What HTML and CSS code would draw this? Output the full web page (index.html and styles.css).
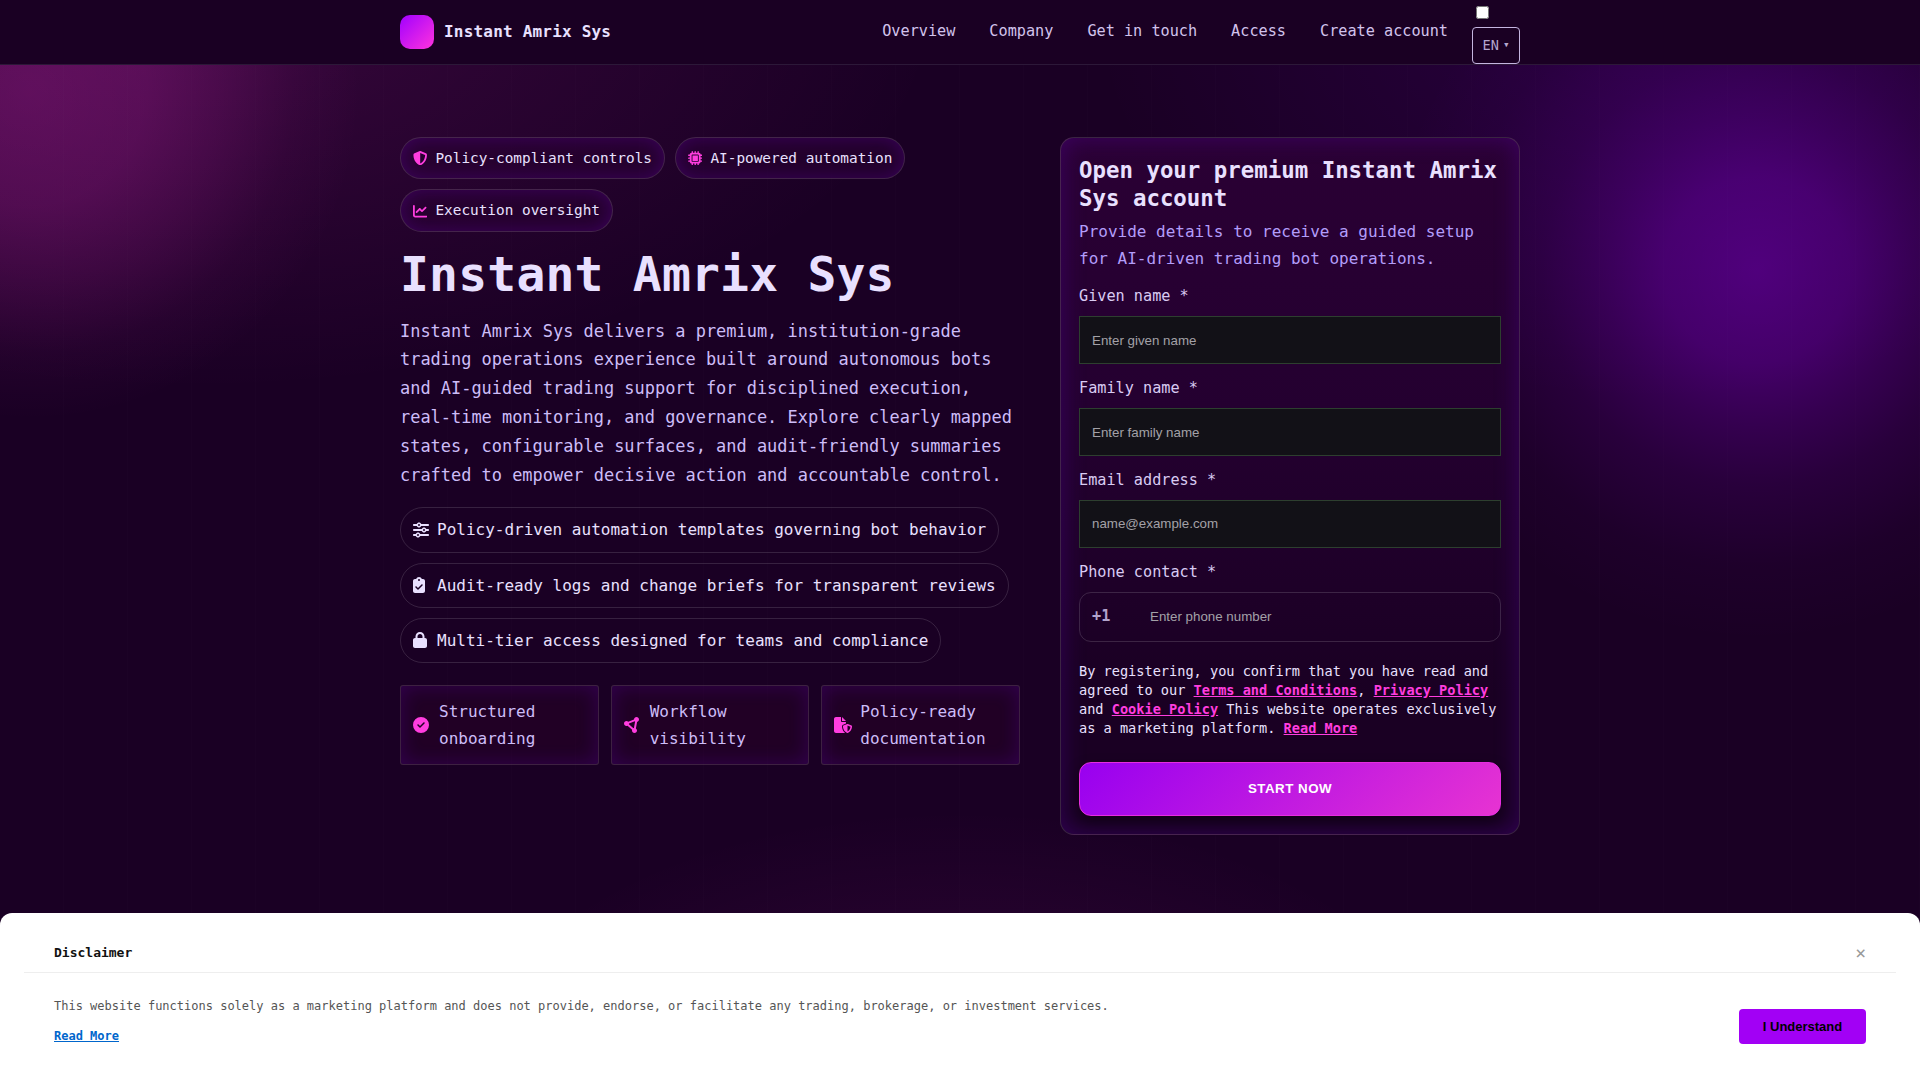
FILE: index.html
```html
<!DOCTYPE html>
<html lang="en">
<head>
  <meta charset="UTF-8">
  <meta name="viewport" content="width=device-width, initial-scale=1.0">
  <title>Instant Amrix Sys</title>
  <link rel="stylesheet" href="styles.css">
</head>
<body>
  <header class="site-header">
    <div class="container header-inner">
      <a class="brand" href="#">
        <span class="brand-mark"></span>
        <span>Instant Amrix Sys</span>
      </a>
      <div class="header-right">
        <nav class="nav">
          <a href="#">Overview</a>
          <a href="#">Company</a>
          <a href="#">Get in touch</a>
          <a href="#">Access</a>
          <a href="#">Create account</a>
        </nav>
        <div class="lang">
          <input type="checkbox" class="lang-toggle" aria-label="Language">
          <label class="lang-btn">EN <span class="caret">▾</span></label>
        </div>
      </div>
    </div>
  </header>

  <main class="container hero">
    <section class="hero-text">
      <div class="pills">
        <span class="pill">
          <svg class="icon" viewBox="0 0 512 512"><path d="M256 0c4.6 0 9.2 1 13.4 2.9L457.7 82.8c22 9.3 38.4 31 38.3 57.2c-.5 99.2-41.3 280.7-213.6 363.2c-16.7 8-36.1 8-52.8 0C57.3 420.7 16.5 239.2 16 140c-.1-26.2 16.3-47.9 38.3-57.2L242.7 2.9C246.8 1 251.4 0 256 0zm0 66.8V444.8C394 378 431.1 230.1 432 141.4L256 66.8l0 0z"/></svg>
          Policy-compliant controls
        </span>
        <span class="pill">
          <svg class="icon" viewBox="0 0 512 512"><path d="M176 24c0-13.3-10.7-24-24-24s-24 10.7-24 24V64c-35.3 0-64 28.7-64 64H24c-13.3 0-24 10.7-24 24s10.7 24 24 24H64v56H24c-13.3 0-24 10.7-24 24s10.7 24 24 24H64v56H24c-13.3 0-24 10.7-24 24s10.7 24 24 24H64c0 35.3 28.7 64 64 64v40c0 13.3 10.7 24 24 24s24-10.7 24-24V448h56v40c0 13.3 10.7 24 24 24s24-10.7 24-24V448h56v40c0 13.3 10.7 24 24 24s24-10.7 24-24V448c35.3 0 64-28.7 64-64h40c13.3 0 24-10.7 24-24s-10.7-24-24-24H448V280h40c13.3 0 24-10.7 24-24s-10.7-24-24-24H448V176h40c13.3 0 24-10.7 24-24s-10.7-24-24-24H448c0-35.3-28.7-64-64-64V24c0-13.3-10.7-24-24-24s-24 10.7-24 24V64H280V24c0-13.3-10.7-24-24-24s-24 10.7-24 24V64H176V24zM160 128H352c17.7 0 32 14.3 32 32V352c0 17.7-14.3 32-32 32H160c-17.7 0-32-14.3-32-32V160c0-17.7 14.3-32 32-32zm192 32H160V352H352V160z"/></svg>
          AI-powered automation
        </span>
        <span class="pill">
          <svg class="icon" viewBox="0 0 512 512"><path d="M64 64c0-17.7-14.3-32-32-32S0 46.3 0 64V400c0 44.2 35.8 80 80 80H480c17.7 0 32-14.3 32-32s-14.3-32-32-32H80c-8.8 0-16-7.2-16-16V64zm406.6 86.6c12.5-12.5 12.5-32.8 0-45.3s-32.8-12.5-45.3 0L320 210.7l-57.4-57.4c-12.5-12.5-32.8-12.5-45.3 0l-112 112c-12.5 12.5-12.5 32.8 0 45.3s32.8 12.5 45.3 0L240 221.3l57.4 57.4c12.5 12.5 32.8 12.5 45.3 0l128-128z"/></svg>
          Execution oversight
        </span>
      </div>

      <h1>Instant Amrix Sys</h1>
      <p class="lead">Instant Amrix Sys delivers a premium, institution-grade trading operations experience built around autonomous bots and AI-guided trading support for disciplined execution, real-time monitoring, and governance. Explore clearly mapped states, configurable surfaces, and audit-friendly summaries crafted to empower decisive action and accountable control.</p>

      <ul class="features">
        <li>
          <svg class="icon" viewBox="0 0 512 512"><path d="M0 416c0 17.7 14.3 32 32 32l54.7 0c12.3 28.3 40.5 48 73.3 48s61-19.7 73.3-48L480 448c17.7 0 32-14.3 32-32s-14.3-32-32-32l-246.7 0c-12.3-28.3-40.5-48-73.3-48s-61 19.7-73.3 48L32 384c-17.7 0-32 14.3-32 32zm128 0a32 32 0 1 1 64 0 32 32 0 1 1 -64 0zM320 256a32 32 0 1 1 64 0 32 32 0 1 1 -64 0zm32-80c-32.8 0-61 19.7-73.3 48L32 224c-17.7 0-32 14.3-32 32s14.3 32 32 32l246.7 0c12.3 28.3 40.5 48 73.3 48s61-19.7 73.3-48l54.7 0c17.7 0 32-14.3 32-32s-14.3-32-32-32l-54.7 0c-12.3-28.3-40.5-48-73.3-48zM192 128a32 32 0 1 1 0-64 32 32 0 1 1 0 64zm73.3-64C253 35.7 224.8 16 192 16s-61 19.7-73.3 48L32 64C14.3 64 0 78.3 0 96s14.3 32 32 32l86.7 0c12.3 28.3 40.5 48 73.3 48s61-19.7 73.3-48L480 128c17.7 0 32-14.3 32-32s-14.3-32-32-32L265.3 64z"/></svg>
          Policy-driven automation templates governing bot behavior
        </li>
        <li>
          <svg class="icon" viewBox="0 0 512 512"><path d="M192 0c-41.8 0-77.4 26.7-90.5 64H64C28.7 64 0 92.7 0 128V448c0 35.3 28.7 64 64 64H320c35.3 0 64-28.7 64-64V128c0-35.3-28.7-64-64-64H282.5C269.4 26.7 233.8 0 192 0zm0 64a32 32 0 1 1 0 64 32 32 0 1 1 0-64zM305 273L177 401c-9.4 9.4-24.6 9.4-33.9 0L79 337c-9.4-9.4-9.4-24.6 0-33.9s24.6-9.4 33.9 0l47 47L271 239c9.4-9.4 24.6-9.4 33.9 0s9.4 24.6 0 33.9z"/></svg>
          Audit-ready logs and change briefs for transparent reviews
        </li>
        <li>
          <svg class="icon" viewBox="0 0 512 512"><path d="M144 144v48H304V144c0-44.2-35.8-80-80-80s-80 35.8-80 80zM80 192V144C80 64.5 144.5 0 224 0s144 64.5 144 144v48h16c35.3 0 64 28.7 64 64V448c0 35.3-28.7 64-64 64H64c-35.3 0-64-28.7-64-64V256c0-35.3 28.7-64 64-64H80z"/></svg>
          Multi-tier access designed for teams and compliance
        </li>
      </ul>

      <div class="cards">
        <div class="card">
          <svg class="icon" viewBox="0 0 512 512"><path d="M256 512A256 256 0 1 0 256 0a256 256 0 1 0 0 512zM369 209L241 337c-9.4 9.4-24.6 9.4-33.9 0l-64-64c-9.4-9.4-9.4-24.6 0-33.9s24.6-9.4 33.9 0l47 47L335 175c9.4-9.4 24.6-9.4 33.9 0s9.4 24.6 0 33.9z"/></svg>
          <span>Structured onboarding</span>
        </div>
        <div class="card">
          <svg class="icon" viewBox="0 0 512 512"><path d="M418.4 157.9c35.3-8.3 61.6-40 61.6-77.9c0-44.2-35.8-80-80-80c-43.4 0-78.7 34.5-80 77.5L136.2 151.1C121.7 136.8 101.9 128 80 128c-44.2 0-80 35.8-80 80s35.8 80 80 80c12.2 0 23.8-2.7 34.1-7.6L259.7 407.8c-2.4 7.6-3.7 15.8-3.7 24.2c0 44.2 35.8 80 80 80s80-35.8 80-80c0-27.7-14-52.1-35.4-66.4l37.8-207.7zM156.3 232.2c2.2-6.9 3.5-14.2 3.7-21.7l183.8-73.5c3.6 3.5 7.4 6.7 11.6 9.5L317.6 354.1c-5.5 1.3-10.8 3.1-15.8 5.5L156.3 232.2z"/></svg>
          <span>Workflow visibility</span>
        </div>
        <div class="card">
          <svg class="icon icon-wide" viewBox="0 0 576 512"><path d="M0 64C0 28.7 28.7 0 64 0H224V128c0 17.7 14.3 32 32 32H384v47l-92.8 37.1c-21.3 8.5-35.2 29.1-35.2 52c0 56.6 18.9 148 94.2 208.3c-9 4.8-19.3 7.6-30.2 7.6H64c-35.3 0-64-28.7-64-64V64zm384 64H256V0L384 128zm39.1 97.7c5.7-2.3 12.1-2.3 17.8 0l120 48C570 277.4 576 286.2 576 296c0 63.3-25.9 168.8-134.8 214.2c-5.9 2.5-12.6 2.5-18.5 0C313.9 464.8 288 359.3 288 296c0-9.8 6-18.6 15.1-22.3l120-48zM527.4 312L432 273.8V461.7c68.2-33 91.5-99 95.4-149.7z"/></svg>
          <span>Policy-ready documentation</span>
        </div>
      </div>
    </section>

    <form class="signup">
      <h2>Open your premium Instant Amrix Sys account</h2>
      <p class="signup-sub">Provide details to receive a guided setup for AI-driven trading bot operations.</p>
      <div class="field">
        <label for="fname">Given name *</label>
        <input id="fname" type="text" placeholder="Enter given name">
      </div>
      <div class="field">
        <label for="lname">Family name *</label>
        <input id="lname" type="text" placeholder="Enter family name">
      </div>
      <div class="field">
        <label for="email">Email address *</label>
        <input id="email" type="email" placeholder="name@example.com">
      </div>
      <div class="field">
        <label for="phone">Phone contact *</label>
        <div class="phone">
          <span class="code">+1</span>
          <input id="phone" type="tel" placeholder="Enter phone number">
        </div>
      </div>
      <p class="consent">By registering, you confirm that you have read and agreed to our <a href="#">Terms and Conditions</a>, <a href="#">Privacy Policy</a> and <a href="#">Cookie Policy</a> This website operates exclusively as a marketing platform. <a href="#">Read More</a></p>
      <button type="button" class="submit">START NOW</button>
    </form>
  </main>

  <div class="disclaimer">
    <div class="disclaimer-head">
      <strong>Disclaimer</strong>
      <span class="close">×</span>
    </div>
    <div class="disclaimer-body">
      <div>
        <p>This website functions solely as a marketing platform and does not provide, endorse, or facilitate any trading, brokerage, or investment services.</p>
        <a href="#">Read More</a>
      </div>
      <button type="button" class="agree">I Understand</button>
    </div>
  </div>
</body>
</html>
```

FILE: styles.css
```css
* {
  box-sizing: border-box;
}
body {
  margin: 0;
  height: 100vh;
  overflow: hidden;
  font-family: "DejaVu Sans Mono", monospace;
  font-size: 16px;
  line-height: 1.7;
  color: #e9e0ff;
  background:
    repeating-linear-gradient(90deg, transparent 0 63px, rgba(255, 255, 255, 0.008) 63px 64px),
    radial-gradient(circle 330px at 30px 90px, rgba(255, 51, 221, 0.24), rgba(255, 51, 221, 0.2) 35%, rgba(255, 51, 221, 0.12) 58%, rgba(255, 51, 221, 0.04) 80%, transparent),
    radial-gradient(circle 370px at 1757px 270px, rgba(160, 0, 255, 0.38), rgba(160, 0, 255, 0.31) 25%, rgba(160, 0, 255, 0.2) 42%, rgba(160, 0, 255, 0.11) 58%, rgba(160, 0, 255, 0.03) 80%, transparent),
    radial-gradient(750px 390px at 10% 0, rgba(255, 51, 221, 0.13), transparent),
    radial-gradient(560px 400px at 86% 0, rgba(140, 0, 255, 0.13), transparent),
    radial-gradient(500px 270px at 50% 100%, rgba(255, 51, 221, 0.1), transparent),
    #1a0024;
}
a {
  color: inherit;
  text-decoration: none;
}
.container {
  width: 1120px;
  margin: 0 auto;
}
.site-header {
  height: 65px;
  background: #1a0023;
  border-bottom: 1px solid #2c1838;
}
.header-inner {
  height: 64px;
  display: flex;
  align-items: center;
  justify-content: space-between;
}
.brand {
  display: flex;
  align-items: center;
  gap: 10px;
  font-weight: bold;
  letter-spacing: 0.2px;
}
.brand-mark {
  width: 34px;
  height: 34px;
  border-radius: 10px;
  background: linear-gradient(135deg, #a100ff, #ff33dd);
}
.header-right {
  display: flex;
  align-items: center;
  gap: 24px;
}
.nav {
  display: flex;
  gap: 34px;
  padding-bottom: 1px;
  font-size: 15.2px;
  color: #d2c3ec;
}
.lang {
  width: 48px;
  height: 64px;
  display: flex;
  flex-direction: column;
  justify-content: space-between;
  padding-top: 6px;
}
.lang-toggle {
  width: 13px;
  height: 13px;
  margin: 0 0 0 4px;
}
.lang-btn {
  height: 37px;
  display: flex;
  align-items: center;
  justify-content: center;
  gap: 4px;
  border: 1px solid #c4b5e0;
  border-radius: 4px;
  font-size: 13.6px;
  color: #b5a7cf;
}
.caret {
  font-size: 11px;
}

.hero {
  display: grid;
  grid-template-columns: 620px 460px;
  gap: 40px;
  align-items: start;
  padding-top: 72px;
}
.icon {
  width: 1em;
  height: 1em;
  flex: none;
  fill: currentColor;
}
.pills {
  display: flex;
  flex-wrap: wrap;
  gap: 10px;
}
.pill {
  display: flex;
  align-items: center;
  gap: 8px;
  padding: 8px 12px;
  font-size: 14.4px;
  border: 1px solid rgba(255, 255, 255, 0.14);
  border-radius: 22px;
  background: rgba(40, 0, 48, 0.6);
  box-shadow: inset 0 0 18px rgba(110, 0, 200, 0.3);
}
.pill .icon,
.card .icon {
  color: #ff3ddf;
}
h1 {
  margin: 14px 0 13px;
  font-size: 48px;
  line-height: 1.2;
  letter-spacing: 0.2px;
}
.lead {
  margin: 0 0 18px;
  font-size: 16.96px;
  color: #cdbdf8;
}
.features {
  list-style: none;
  margin: 0 0 22px;
  padding: 0;
  display: flex;
  flex-direction: column;
  align-items: flex-start;
  gap: 10px;
}
.features li {
  display: flex;
  align-items: center;
  gap: 8px;
  padding: 8px 12px;
  border: 1px solid rgba(255, 255, 255, 0.13);
  border-radius: 24px;
}
.cards {
  display: grid;
  grid-template-columns: repeat(3, 1fr);
  gap: 12px;
}
.card {
  display: flex;
  align-items: center;
  gap: 10px;
  padding: 12px;
  border: 1px solid rgba(255, 255, 255, 0.13);
  border-radius: 3px;
  background: rgba(255, 0, 100, 0.03);
  box-shadow: inset 0 0 20px rgba(120, 0, 255, 0.2);
  color: #cdbdf8;
}
.card .icon-wide {
  width: 18px;
  margin-right: -2px;
}

.signup {
  padding: 18px;
  border: 1px solid rgba(255, 255, 255, 0.14);
  border-radius: 14px;
  background: linear-gradient(#2a0034, #240030 40%, #1a0023 80%);
  box-shadow: inset 0 0 24px rgba(110, 0, 220, 0.28);
}
.signup h2 {
  margin: 0 0 6px;
  font-size: 22.4px;
  line-height: 28px;
}
.signup-sub {
  margin: 0 0 12px;
  color: #b39dfa;
}
.field {
  margin-bottom: 12px;
}
.field label {
  display: block;
  margin-bottom: 6px;
  font-size: 15.2px;
  color: #d9cbf3;
}
.field input {
  display: block;
  width: 100%;
  height: 48px;
  padding: 0 12px;
  border: 1px solid #2d3f2f;
  background: #121117;
  font-family: "Liberation Sans", Arial, sans-serif;
  font-size: 13.33px;
}
.field input::placeholder {
  color: #a3a1a7;
}
.phone {
  height: 50px;
  display: flex;
  align-items: center;
  border: 1px solid rgba(255, 255, 255, 0.14);
  border-radius: 12px;
}
.code {
  width: 58px;
  padding-left: 12px;
  font-weight: bold;
  font-size: 15.2px;
  color: #b3a4cc;
}
.phone input {
  flex: 1;
  border: 0;
  background: none;
}
.consent {
  margin: 20px 0 24px;
  font-size: 13.6px;
  line-height: 1.4;
}
.consent a {
  color: #ff3ddf;
  font-weight: bold;
  text-decoration: underline;
}
.submit {
  display: block;
  width: 100%;
  height: 54px;
  border: 1px solid #e62ee0;
  border-radius: 12px;
  background: linear-gradient(135deg, #9800f0, #e733d2);
  box-shadow: 0 6px 14px rgba(0, 0, 0, 0.4);
  font: bold 13.33px "Liberation Sans", Arial, sans-serif;
  letter-spacing: 0.5px;
  color: #fff;
}

.disclaimer {
  position: fixed;
  left: 0;
  right: 0;
  bottom: 0;
  height: 167px;
  padding: 24px;
  background: #fff;
  border-radius: 12px 12px 0 0;
  color: #555;
}
.disclaimer-head {
  display: flex;
  align-items: center;
  justify-content: space-between;
  height: 36px;
  padding: 0 30px 3px;
  border-bottom: 1px solid #eee;
  font-size: 13px;
}
.disclaimer-head strong {
  color: #111;
}
.close {
  font-size: 18px;
  line-height: 1;
  color: #999;
}
.disclaimer-body {
  display: flex;
  justify-content: space-between;
  padding: 23px 30px 0;
  font-size: 12px;
}
.disclaimer-body p {
  margin: 0 0 10px;
}
.disclaimer-body a {
  color: #06c;
  font-weight: bold;
  text-decoration: underline;
}
.agree {
  width: 127px;
  height: 35px;
  margin-top: 13px;
  border: 0;
  border-radius: 4px;
  background: #a200f5;
  font: bold 13px "Liberation Sans", Arial, sans-serif;
  color: #000;
}
```
